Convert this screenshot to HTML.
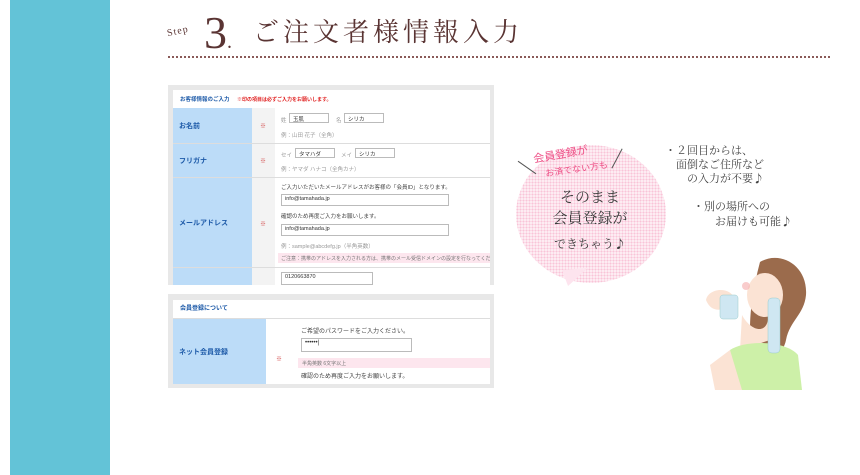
<!DOCTYPE html>
<html><head><meta charset="utf-8"><style>
*{margin:0;padding:0;box-sizing:border-box}
body{width:860px;height:475px;background:#fff;position:relative;overflow:hidden;font-family:"Liberation Sans","Noto Sans CJK JP",sans-serif}
.a{position:absolute}
.side{left:10px;top:0;width:100px;height:475px;background:#63c3d7}
.t{color:#5a3433;font-family:"Liberation Serif","Noto Serif CJK SC",serif}
.dot{left:168px;top:56px;width:662px;border-top:2px dotted #8a5a58}
.shot{background:#e8e8e8}
.in{background:#fff}
.lab{background:#bcdcf8;color:#1d5aa8;font-weight:bold;font-size:7px;display:flex;align-items:center;padding-left:6px}
.hr{border-top:1px solid #ddd}
.tx{font-size:5.5px;color:#444;white-space:nowrap}
.g{color:#999}
.box{border:1px solid #bbb;height:10px;font-size:5.5px;color:#333;padding:1px 3px;background:#fff}
.m{color:#d04040;font-size:6px}
.bub{left:516px;top:145px;width:150px;height:138px;border-radius:50%;background:radial-gradient(circle,#f9c4d7 0.9px,#fdeef4 1.1px);background-size:3px 3px}
.jp{font-family:"Noto Sans CJK JP",sans-serif;color:#444}
.sf{font-family:"Noto Serif CJK SC",serif}
</style></head><body>
<div class="a side"></div>
<div class="a t" style="left:167px;top:26px;font-size:10px;transform:rotate(-12deg);letter-spacing:1px">Step</div>
<div class="a t" style="left:204px;top:10px;font-size:46px;line-height:46px">3<span style="font-size:20px">.</span></div>
<div class="a t sf" style="left:253px;top:14px;font-size:26px;letter-spacing:4px;line-height:34px">ご注文者様情報入力</div>
<div class="a dot"></div>

<div class="a shot" style="left:168px;top:85px;width:326px;height:200px"></div>
<div class="a in" style="left:173px;top:90px;width:317px;height:195px"></div>
<div class="a tx" style="left:180px;top:95px;color:#1d5aa8;font-weight:bold">お客様情報のご入力 <span style="color:#e02020;font-size:5px;margin-left:6px">※印の項目は必ずご入力をお願いします。</span></div>
<div class="a lab" style="left:173px;top:108px;width:79px;height:35px">お名前</div>
<div class="a lab" style="left:173px;top:144px;width:79px;height:33px">フリガナ</div>
<div class="a lab" style="left:173px;top:178px;width:79px;height:89px">メールアドレス</div>
<div class="a lab" style="left:173px;top:268px;width:79px;height:17px"></div>
<div class="a" style="left:252px;top:108px;width:23px;height:177px;background:#f3f3f3"></div>
<div class="a hr" style="left:173px;top:143px;width:317px"></div>
<div class="a hr" style="left:173px;top:177px;width:317px"></div>
<div class="a hr" style="left:173px;top:267px;width:317px"></div>
<div class="a m" style="left:260px;top:121px">※</div>
<div class="a m" style="left:260px;top:156px">※</div>
<div class="a m" style="left:260px;top:219px">※</div>
<div class="a tx g" style="left:281px;top:116px">姓</div><div class="a box" style="left:289px;top:113px;width:40px">玉肌</div>
<div class="a tx g" style="left:336px;top:116px">名</div><div class="a box" style="left:344px;top:113px;width:40px">シリカ</div>
<div class="a tx g" style="left:281px;top:131px">例：山田 花子（全角）</div>
<div class="a tx g" style="left:281px;top:151px">セイ</div><div class="a box" style="left:295px;top:148px;width:40px">タマハダ</div>
<div class="a tx g" style="left:341px;top:151px">メイ</div><div class="a box" style="left:355px;top:148px;width:40px">シリカ</div>
<div class="a tx g" style="left:281px;top:165px">例：ヤマダ ハナコ（全角カナ）</div>
<div class="a tx" style="left:281px;top:183px">ご入力いただいたメールアドレスがお客様の「会員ID」となります。</div>
<div class="a box" style="left:281px;top:194px;width:168px;height:12px">info@tamahada.jp</div>
<div class="a tx" style="left:281px;top:212px">確認のため再度ご入力をお願いします。</div>
<div class="a box" style="left:281px;top:224px;width:168px;height:12px">info@tamahada.jp</div>
<div class="a tx g" style="left:281px;top:242px">例：sample@abcdefg.jp（半角英数）</div>
<div class="a tx" style="left:278px;top:253px;width:212px;height:10px;background:#fde6ee;color:#777;font-size:5px;padding:2px 3px;overflow:hidden">ご注意：携帯のアドレスを入力される方は、携帯のメール受信ドメインの設定を行なってください</div>
<div class="a box" style="left:281px;top:272px;width:92px;height:13px">0120663870</div>

<div class="a shot" style="left:168px;top:294px;width:326px;height:94px"></div>
<div class="a in" style="left:173px;top:300px;width:317px;height:84px"></div>
<div class="a tx" style="left:180px;top:303px;color:#1d5aa8;font-weight:bold;font-size:6px">会員登録について</div>
<div class="a hr" style="left:173px;top:318px;width:317px"></div>
<div class="a lab" style="left:173px;top:319px;width:93px;height:65px">ネット会員登録</div>
<div class="a m" style="left:276px;top:354px">※</div>
<div class="a tx" style="left:301px;top:326px;font-size:6px">ご希望のパスワードをご入力ください。</div>
<div class="a box" style="left:301px;top:338px;width:111px;height:14px;font-size:6px">••••••|</div>
<div class="a tx" style="left:298px;top:358px;width:192px;height:10px;background:#fde6ee;color:#777;font-size:5px;padding:2px 4px">半角英数 6文字以上</div>
<div class="a tx" style="left:301px;top:371px;font-size:6px">確認のため再度ご入力をお願いします。</div>

<div class="a bub"></div>
<svg class="a" style="left:560px;top:268px" width="30" height="22"><path d="M2 2 L28 0 L8 18 Z" fill="#fde4ee"/></svg>
<div class="a jp" style="left:533px;top:146px;font-size:11px;color:#ee4f86;transform:rotate(-10deg)">会員登録が</div>
<div class="a jp" style="left:545px;top:162px;font-size:9px;color:#ee4f86;transform:rotate(-8deg)">お済でない方も</div>
<div class="a" style="left:516px;top:167px;width:22px;border-top:1px solid #555;transform:rotate(35deg)"></div>
<div class="a" style="left:606px;top:158px;width:22px;border-top:1px solid #555;transform:rotate(-62deg)"></div>
<div class="a jp sf" style="left:530px;top:186px;width:120px;text-align:center;font-size:15px;line-height:21px;color:#3a3a3a">そのまま<br>会員登録が</div>
<div class="a jp sf" style="left:540px;top:235px;width:100px;text-align:center;font-size:12px;color:#3a3a3a">できちゃう♪</div>
<div class="a jp sf" style="left:665px;top:143px;font-size:11px;line-height:14px;color:#444;white-space:pre">・２回目からは、
　面倒なご住所など
　　の入力が不要♪</div>
<div class="a jp sf" style="left:693px;top:199px;font-size:11px;line-height:15px;color:#444;white-space:pre">・別の場所への
　　お届けも可能♪</div>

<svg class="a" style="left:690px;top:240px" width="120" height="150">
<path d="M70 22 C90 10 118 25 116 55 C114 75 100 80 96 100 C92 120 70 125 62 110 C58 90 60 60 70 22Z" fill="#9b6b4c"/>
<ellipse cx="75" cy="55" rx="18" ry="22" fill="#fbe3d4"/>
<path d="M52 75 C60 90 75 95 78 80 L80 100 L50 110Z" fill="#fbe3d4"/>
<path d="M40 110 C55 100 95 100 108 115 L112 150 L45 150Z" fill="#cdf0a8"/>
<path d="M20 125 L40 110 L52 150 L25 150Z" fill="#fbe3d4"/>
<path d="M16 60 C18 48 40 46 44 58 C40 70 22 76 16 60Z" fill="#fbe3d4"/>
<rect x="30" y="55" width="18" height="24" rx="3" fill="#cfe7f2" stroke="#9cc" stroke-width=".5"/>
<rect x="78" y="58" width="12" height="55" rx="4" fill="#cfe7f2" stroke="#9cc" stroke-width=".5"/>
<circle cx="56" cy="46" r="4" fill="#f7b6b6" opacity=".7"/>
</svg>
</body></html>
